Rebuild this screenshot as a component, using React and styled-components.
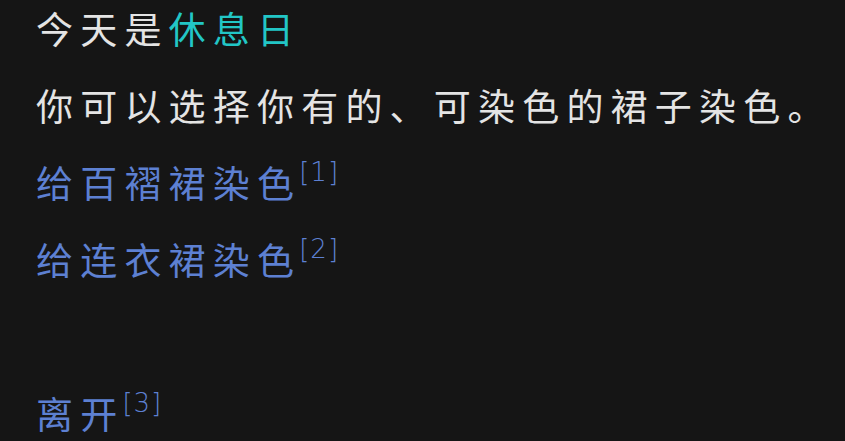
import styled, { createGlobalStyle } from "styled-components";

const GlobalStyle = createGlobalStyle`
  html, body {
    margin: 0;
    background: #151515;
  }
`;

const Page = styled.div`
  min-height: 441px;
  padding: 0 36px;
  margin-top: -10px;
  background: #151515;
  color: #e4e4e4;
  font-family: "Noto Sans CJK SC", "Noto Sans", sans-serif;
  font-size: 37px;
  font-weight: 400;
  letter-spacing: 7.2px;
  overflow: hidden;
`;

const Line = styled.p`
  margin: 0;
  height: 77px;
  line-height: 77px;
  white-space: nowrap;
`;

const Accent = styled.span`
  color: #22c6c6;
`;

const Choice = styled.a`
  color: #5d80d2;
  text-decoration: none;
  cursor: pointer;
`;

const Note = styled.sup`
  font-size: 26px;
  letter-spacing: 1px;
  vertical-align: 0;
  position: relative;
  top: -17px;
  margin-left: -2px;
  font-family: "DejaVu Sans", sans-serif;
  font-weight: 300;
`;

const choices = [
  { id: 1, label: "给百褶裙染色" },
  { id: 2, label: "给连衣裙染色" },
];

export default function App() {
  return (
    <>
      <GlobalStyle />
      <Page>
        <Line>
          今天是<Accent>休息日</Accent>
        </Line>
        <Line>你可以选择你有的、可染色的裙子染色。</Line>
        {choices.map((c) => (
          <Line key={c.id}>
            <Choice>
              {c.label}
              <Note>[{c.id}]</Note>
            </Choice>
          </Line>
        ))}
        <Line />
        <Line>
          <Choice>
            离开<Note>[3]</Note>
          </Choice>
        </Line>
      </Page>
    </>
  );
}
